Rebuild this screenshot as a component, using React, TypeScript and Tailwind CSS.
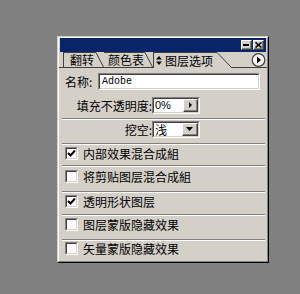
import React from 'react'

const cjk = "font-['Noto_Sans_CJK_SC','Noto_Sans',sans-serif]"

interface CheckRow {
  id: string
  label: string
  checked: boolean
  h: string
  pt: string
}

const checkRows: CheckRow[] = [
  { id: 'inner', label: '内部效果混合成組', checked: true, h: 'h-[20px]', pt: 'pt-[2px]' },
  { id: 'clip', label: '将剪贴图层混合成組', checked: false, h: 'h-[24px]', pt: 'pt-[3px]' },
  { id: 'shape', label: '透明形状图层', checked: true, h: 'h-[21px]', pt: 'pt-[2px]' },
  { id: 'mask', label: '图层蒙版隐藏效果', checked: false, h: 'h-[23px]', pt: 'pt-[2px]' },
  { id: 'vector', label: '矢量蒙版隐藏效果', checked: false, h: 'h-[20px]', pt: 'pt-[1px]' },
]

const Sunken = ({ className, children }: { className?: string; children?: React.ReactNode }) => (
  <div className={`border border-t-[#808080] border-l-[#808080] border-r-white border-b-white ${className ?? ''}`}>
    <div className="h-full w-full border border-t-[#404040] border-l-[#404040] border-r-[#d4d0c8] border-b-[#d4d0c8] bg-white flex">
      {children}
    </div>
  </div>
)

const Raised = ({ className, children }: { className?: string; children?: React.ReactNode }) => (
  <div className={`border border-t-white border-l-white border-r-[#404040] border-b-[#404040] bg-[#d4d0c8] ${className ?? ''}`}>
    <div className="h-full w-full border-r border-b border-[#808080] flex items-center justify-center">
      {children}
    </div>
  </div>
)

const Separator = () => (
  <div className="ml-[3px] mr-[2px] h-[2px] border-t border-[#808080] border-b border-b-white" />
)

const Slant = ({ w }: { w: number }) => (
  <svg width={w} height={16} className="block shrink-0">
    <polygon points={`0,0 ${w},16 0,16`} fill="#d4d0c8" />
    <line x1={0} y1={0.5} x2={w} y2={16} stroke="#404040" strokeWidth={1} />
    <line x1={0} y1={15.5} x2={w} y2={15.5} stroke="#404040" strokeWidth={1} />
  </svg>
)

const ActiveSlant = () => (
  <svg width={15} height={16} className="block shrink-0">
    <polygon points="0,0 15,16 0,16" fill="#d4d0c8" />
    <line x1={0} y1={0.5} x2={15} y2={16} stroke="#404040" strokeWidth={1} />
  </svg>
)

export default function App() {
  return (
    <div className={`w-[300px] h-[294px] bg-[#808080] pt-[36px] pl-[57px] ${cjk}`}>
      {/* Palette window */}
      <div className="w-[212px] h-[227px] border border-t-[#d4d0c8] border-l-[#d4d0c8] border-r-black border-b-black">
        <div className="h-full w-full border border-t-white border-l-white border-r-[#808080] border-b-[#808080] bg-[#d4d0c8] flex flex-col">
          {/* Title bar */}
          <div className="mx-[1px] h-[14px] bg-[#0a246a] flex items-center justify-end gap-[1px] pr-[2px]">
            <Raised className="w-[11px] h-[10px]">
              <div className="w-[6px] h-[2px] bg-black" />
            </Raised>
            <Raised className="w-[11px] h-[10px]">
              <svg width="7" height="6" className="block">
                <path d="M0.5 0.5 L6.5 5.5 M6.5 0.5 L0.5 5.5" stroke="black" strokeWidth="1.6" />
              </svg>
            </Raised>
          </div>

          {/* Tabs */}
          <div className="h-[16px] flex items-end">
            <div className="w-[4px] h-[16px] border-b border-[#404040]" />
            <div className="h-[16px] flex">
              <div className="w-[33px] h-[16px] border-t border-l border-b border-[#404040] pl-[6px] text-[12px] leading-[14px] text-black">
                翻转
              </div>
              <Slant w={8} />
            </div>
            <div className="h-[16px] flex">
              <div className="w-[41px] h-[16px] border-t border-b border-[#404040] pl-[4px] text-[12px] leading-[14px] text-black">
                颜色表
              </div>
              <Slant w={8} />
            </div>
            <div className="h-[16px] flex">
              <div className="w-[64px] h-[16px] border-t border-l border-[#404040] flex items-center pl-[2px] gap-[3px] text-[12px] leading-[14px] text-black">
                <svg width="6" height="9" className="block shrink-0">
                  <polygon points="3,0 6,3.5 0,3.5" fill="black" />
                  <polygon points="0,5.5 6,5.5 3,9" fill="black" />
                </svg>
                <span>图层选项</span>
              </div>
              <ActiveSlant />
            </div>
            <div className="flex-1 h-[16px] border-b border-[#404040] flex items-center justify-end pr-[1px]">
              <svg width="15" height="14" className="block">
                <circle cx="7.5" cy="7" r="6.3" fill="#f4f3ef" stroke="#404040" strokeWidth="1.2" />
                <polygon points="6,3.5 10,7 6,10.5" fill="black" />
              </svg>
            </div>
          </div>

          {/* Content */}
          <div className="flex flex-col text-[12px] leading-none text-black">
            {/* Name */}
            <div className="mt-[5px] h-[17px] flex items-center pl-[6px]">
              <span className="w-[33px]">名称:</span>
              <Sunken className="w-[162px] h-[17px]">
                <span className="pl-[2px] self-center font-['Liberation_Mono',monospace] text-[10px]">Adobe</span>
              </Sunken>
            </div>

            {/* Fill opacity */}
            <div className="mt-[7px] h-[17px] flex items-center">
              <span className="w-[93px] text-right">填充不透明度:</span>
              <Sunken className="w-[48px] h-[17px]">
                <span className="flex-1 pl-[1px] self-center font-['Liberation_Sans',sans-serif] text-[11px]">0%</span>
                <Raised className="w-[15px] h-full">
                  <svg width="3" height="6" className="block">
                    <polygon points="0,0 3,3 0,6" fill="black" />
                  </svg>
                </Raised>
              </Sunken>
            </div>

            <div className="mt-[4px]">
              <Separator />
            </div>

            {/* Knockout */}
            <div className="mt-[1px] h-[17px] flex items-center">
              <span className="w-[93px] text-right">挖空:</span>
              <Sunken className="w-[48px] h-[17px]">
                <span className="flex-1 pl-[1px] self-center">浅</span>
                <Raised className="w-[16px] h-full">
                  <svg width="7" height="4" className="block">
                    <polygon points="0,0 7,0 3.5,4" fill="black" />
                  </svg>
                </Raised>
              </Sunken>
            </div>

            <div className="mt-[5px]">
              <Separator />
            </div>

            {checkRows.map((row, i) => (
              <React.Fragment key={row.id}>
                <div className={`${row.h} ${row.pt} flex items-start pl-[6px] gap-[5px]`}>
                  <Sunken className="w-[13px] h-[13px] shrink-0">
                    {row.checked && (
                      <svg width="9" height="9" className="block m-auto">
                        <path d="M1 4 L3.5 6.5 L8 1.5" fill="none" stroke="black" strokeWidth="2" />
                      </svg>
                    )}
                  </Sunken>
                  <span className="leading-[13px]">{row.label}</span>
                </div>
                {i < checkRows.length - 1 && <Separator />}
              </React.Fragment>
            ))}
          </div>
        </div>
      </div>
    </div>
  )
}
